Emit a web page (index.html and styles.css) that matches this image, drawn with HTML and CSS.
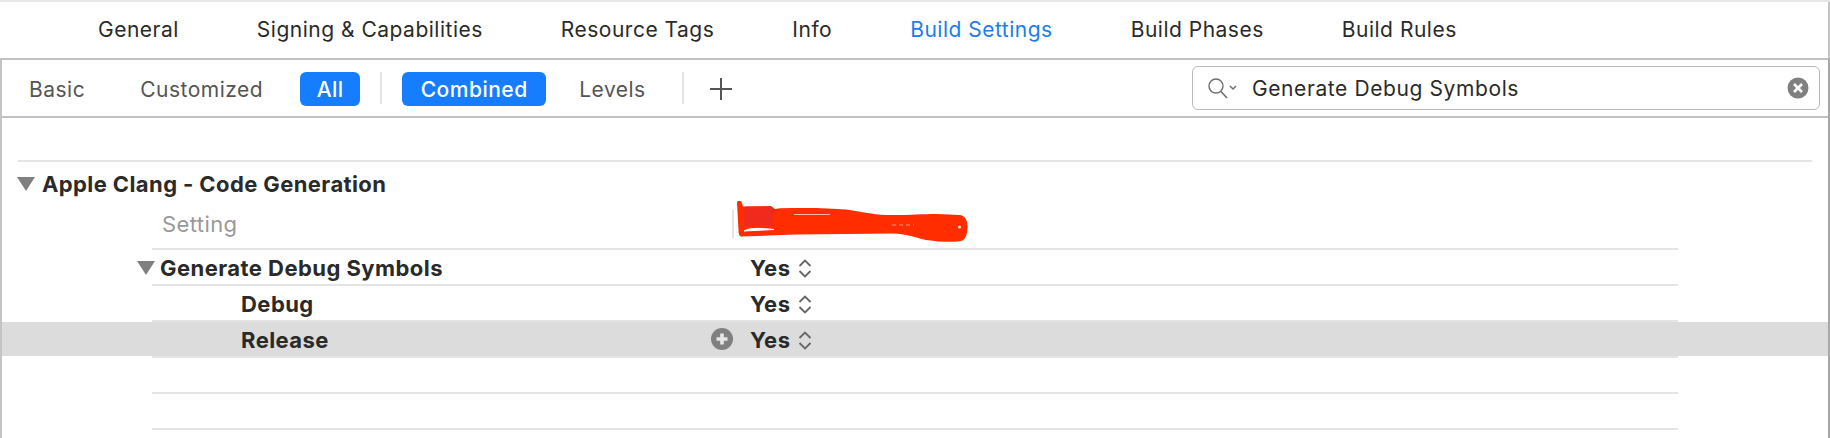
FILE: index.html
```html
<!DOCTYPE html>
<html lang="en">
<head>
    <meta charset="UTF-8">
    <meta name="viewport" content="width=device-width, initial-scale=1.0">
    <title>Build Settings</title>
    <link rel="stylesheet" href="styles.css">
</head>
<body>
    <nav class="tabs">
        <a class="tab">General</a>
        <a class="tab">Signing &amp; Capabilities</a>
        <a class="tab">Resource Tags</a>
        <a class="tab">Info</a>
        <a class="tab active">Build Settings</a>
        <a class="tab">Build Phases</a>
        <a class="tab">Build Rules</a>
    </nav>

    <div class="panel">
        <div class="filter-bar">
            <span class="filter basic">Basic</span>
            <span class="filter customized">Customized</span>
            <span class="filter pill all">All</span>
            <span class="divider first"></span>
            <span class="filter pill combined">Combined</span>
            <span class="filter levels">Levels</span>
            <span class="divider second"></span>
            <svg class="add" width="24" height="24" viewBox="0 0 24 24">
                <path d="M12 1V23M1 12H23" stroke="#555" stroke-width="2" fill="none"/>
            </svg>
            <div class="search">
                <svg class="search-icon" width="32" height="24" viewBox="0 0 32 24">
                    <circle cx="9" cy="10" r="7" stroke="#6e6e6e" stroke-width="1.4" fill="none"/>
                    <path d="M14 15.500L20 22" stroke="#6e6e6e" stroke-width="1.600" fill="none"/>
                    <path d="M23 10L26 13L29 10" stroke="#6e6e6e" stroke-width="1.500" fill="none"/>
                </svg>
                <span class="search-text">Generate Debug Symbols</span>
                <svg class="clear" width="22" height="22" viewBox="0 0 22 22">
                    <circle cx="11" cy="11" r="10.500" fill="#808080"/>
                    <path d="M7 7L15 15M15 7L7 15" stroke="#fff" stroke-width="2.600" fill="none"/>
                </svg>
            </div>
        </div>

        <div class="settings">
            <div class="section-rule"></div>
            <div class="section-title">
                <span class="triangle"></span>
                <span>Apple Clang - Code Generation</span>
            </div>

            <div class="header-row">
                <span class="col-name">Setting</span>
                <span class="col-sep"></span>
                <svg class="scribble" width="234" height="44" viewBox="0 0 234 44">
                    <path d="M1 3C1 0 5 0 6 3L7 6.500L35 6L39 9L44 8.300C70 7.500 94 8 110 9.500C125 11.500 135 14.500 150 15C170 15.500 185 14 200 14L224 15C230 16 232 22 231.500 28C231 36 229 40 225 41C215 42.500 205 42 190 40C178 37 170 34 157 33.500L60 34.500L6 36.500C3 36.500 2.500 34 2.500 30Z" fill="#ff2d00"/>
                    <path d="M8 9C8 7 10 6.500 12 6.500H33C36 6.500 38 9 38 11V26H8Z" fill="#f02a1c"/>
                    <path d="M8 31C14 27.500 24 28 38 29.500L8 31Z" fill="#fff" stroke="#fff"/>
                    <path d="M58 14.500H94" stroke="#ffb9a8" stroke-width="1.200"/>
                    <path d="M156 25H178" stroke="#ff9a80" stroke-width="1" stroke-dasharray="4 3"/>
                    <circle cx="223.500" cy="27" r="1.500" fill="#ffe4dc"/>
                </svg>
            </div>
            <div class="rule"></div>

            <div class="row">
                <div class="name parent"><span class="triangle"></span><span>Generate Debug Symbols</span></div>
                <div class="value"><span>Yes</span>
                    <svg class="stepper" width="14" height="21" viewBox="0 0 14 21"><path d="M1.500 8L7 2.500L12.500 8M1.500 13L7 18.500L12.500 13" stroke="#666" stroke-width="1.800" fill="none"/></svg>
                </div>
            </div>
            <div class="rule"></div>

            <div class="row">
                <div class="name child">Debug</div>
                <div class="value"><span>Yes</span>
                    <svg class="stepper" width="14" height="21" viewBox="0 0 14 21"><path d="M1.500 8L7 2.500L12.500 8M1.500 13L7 18.500L12.500 13" stroke="#666" stroke-width="1.800" fill="none"/></svg>
                </div>
            </div>
            <div class="rule"></div>

            <div class="row selected">
                <div class="name child">Release</div>
                <svg class="plus-badge" width="22" height="22" viewBox="0 0 22 22">
                    <circle cx="11" cy="11" r="11" fill="#808080"/>
                    <path d="M11 5.500V16.500M5.500 11H16.500" stroke="#e6e6e6" stroke-width="3.600" fill="none"/>
                </svg>
                <div class="value"><span>Yes</span>
                    <svg class="stepper" width="14" height="21" viewBox="0 0 14 21"><path d="M1.500 8L7 2.500L12.500 8M1.500 13L7 18.500L12.500 13" stroke="#666" stroke-width="1.800" fill="none"/></svg>
                </div>
            </div>
            <div class="rule"></div>

            <div class="row"></div>
            <div class="rule"></div>
            <div class="row"></div>
            <div class="rule"></div>
        </div>
    </div>
</body>
</html>
```

FILE: styles.css
```css
html, body {
    margin: 0;
    padding: 0;
    height: 438px;
    overflow: hidden;
    background-color: #fff;
}

body {
    font-family: Inter, 'Liberation Sans', sans-serif;
    font-size: 21px;
    letter-spacing: 0.5px;
    color: #2a2a2a;
    border-top: 2px solid #e6e6e6;
    box-sizing: border-box;
}

/* top tabs */
.tabs {
    display: flex;
    align-items: center;
    gap: 78px;
    height: 54px;
    padding-bottom: 2px;
    padding-left: 98px;
    border-right: 2px solid #c4c4c4;
}

.tab.active {
    color: #1a7df2;
}

.panel {
    height: 378px;
    border-top: 2px solid #c0c0c0;
    border-left: 2px solid #c4c4c4;
    border-right: 2px solid #a8a8a8;
}

/* filter bar */
.filter-bar {
    display: flex;
    align-items: center;
    height: 56px;
    border-bottom: 2px solid #c0c0c0;
    color: #555;
}

.filter {
    padding-top: 2px;
}

.basic {
    margin-left: 27px;
}

.customized {
    margin-left: 55px;
}

.pill {
    display: flex;
    align-items: center;
    justify-content: center;
    box-sizing: border-box;
    height: 34px;
    margin-top: 2px;
    padding-top: 0;
    background-color: #167dff;
    color: #fff;
    border-radius: 6px;
    font-weight: 500;
}

.all {
    width: 60px;
    margin-left: 37px;
}

.combined {
    width: 144px;
}

.divider {
    width: 2px;
    height: 32px;
    background-color: #e4e4e4;
}

.divider.first {
    margin: 0 20px 0 20px;
}

.levels {
    margin-left: 33px;
}

.divider.second {
    margin-left: 36px;
}

.add {
    margin-left: 25px;
    margin-top: 2px;
}

.search {
    display: flex;
    align-items: center;
    box-sizing: border-box;
    width: 628px;
    height: 44px;
    margin-left: auto;
    margin-right: 8px;
    padding: 0 10px 0 14px;
    border: 1.5px solid #b8b8b8;
    border-radius: 6px;
    color: #2a2a2a;
}

.search-text {
    margin-left: 13px;
    letter-spacing: 0.6px;
}

.clear {
    margin-left: auto;
}

/* settings table */
.section-rule {
    height: 2px;
    margin: 42px 16px 0 16px;
    background-color: #e4e4e4;
}

.section-title {
    display: flex;
    align-items: center;
    gap: 7px;
    height: 44px;
    padding-left: 15px;
    font-size: 22px;
    font-weight: 700;
    letter-spacing: 0.4px;
}

.triangle {
    width: 0;
    height: 0;
    border-left: 9px solid transparent;
    border-right: 9px solid transparent;
    border-top: 14px solid #808080;
}

.header-row {
    display: flex;
    align-items: center;
    box-sizing: border-box;
    height: 42px;
    padding-bottom: 6px;
}

.col-name {
    width: 570px;
    margin-left: 160px;
    color: #999;
    font-size: 22px;
    letter-spacing: 0.4px;
}

.col-sep {
    width: 2px;
    height: 28px;
    background-color: #e4e4e4;
}

.scribble {
    margin-left: 2px;
    margin-top: -4px;
}

.rule {
    width: 1526px;
    height: 2px;
    margin-left: 150px;
    background-color: #e4e4e4;
}

.row {
    display: grid;
    grid-template-columns: 709px 22px 1fr;
    align-items: center;
    height: 34px;
    font-size: 22px;
    font-weight: 700;
    letter-spacing: 0.45px;
}

.row.selected {
    background-color: #dcdcdc;
}

.name {
    display: flex;
    align-items: center;
    grid-column: 1;
    padding-top: 2px;
}

.name.parent {
    gap: 5px;
    padding-left: 135px;
}

.name.child {
    padding-left: 239px;
}

.plus-badge {
    grid-column: 2;
}

.value {
    display: flex;
    align-items: center;
    gap: 8px;
    grid-column: 3;
    margin-left: 17px;
    padding-top: 2px;
}
```
